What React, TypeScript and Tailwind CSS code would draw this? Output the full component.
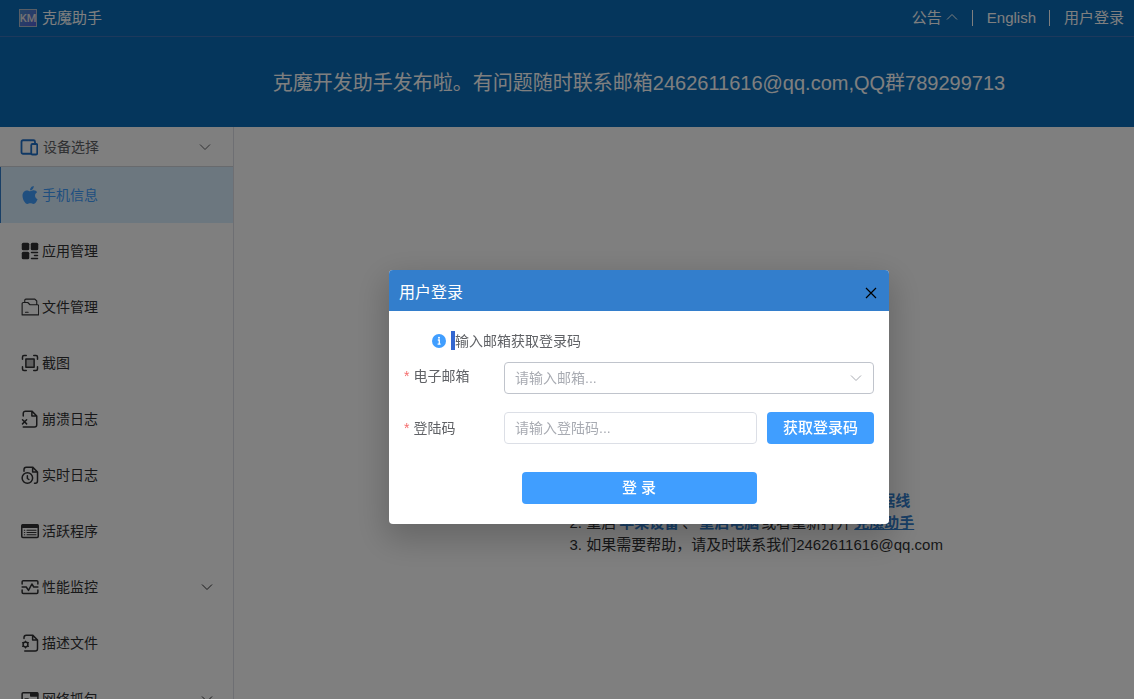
import type { ReactNode } from "react";
import { AiFillApple } from "react-icons/ai";

type MenuItem = {
    label: string;
    icon: ReactNode;
    active?: boolean;
    expandable?: boolean;
};

function Icon({ children }: { children: ReactNode }) {
    return (
        <svg viewBox="0 0 24 24" className="size-[18px] shrink-0" fill="none" stroke="currentColor" strokeWidth="2" strokeLinecap="round" strokeLinejoin="round">
            {children}
        </svg>
    );
}

function Chevron({ up = false }: { up?: boolean }) {
    return (
        <svg viewBox="0 0 12 12" className="size-3 shrink-0" fill="none" stroke="currentColor" strokeWidth="1">
            <path d={up ? "M1 7.5 6 2.5 11 7.5" : "M1 3.5 6 8.5 11 3.5"} />
        </svg>
    );
}

const menu: MenuItem[] = [
    { label: "手机信息", icon: <AiFillApple className="-mx-0.5 size-[22px] shrink-0" />, active: true },
    {
        label: "应用管理",
        icon: (
            <Icon>
                <g fill="currentColor" stroke="none">
                    <rect x="1" y="1" width="10" height="10" rx="2" />
                    <rect x="13" y="1" width="10" height="10" rx="2" />
                    <rect x="1" y="13" width="10" height="10" rx="2" />
                </g>
                <path d="M14 14h8M18 18h4M14 22h8" />
            </Icon>
        ),
    },
    {
        label: "文件管理",
        icon: (
            <Icon>
                <path strokeWidth="1.5" d="M1.5 22.5V7.5A1.5 1.5 0 0 1 3 6h6l3 3h10a1.5 1.5 0 0 1 1.5 1.5v12h-22M5 6V3a1.5 1.5 0 0 1 1.5-1.5h12L21 4v5M6 19h3.5" />
            </Icon>
        ),
    },
    {
        label: "截图",
        icon: (
            <Icon>
                <path d="M2 7V4a2 2 0 0 1 2-2h3M17 2h3a2 2 0 0 1 2 2v3M22 17v3a2 2 0 0 1-2 2h-3M7 22H4a2 2 0 0 1-2-2v-3" />
                <rect x="6.5" y="6.5" width="11" height="11" fill="currentColor" fillOpacity="0.3" />
            </Icon>
        ),
    },
    {
        label: "崩溃日志",
        icon: (
            <Icon>
                <path d="M3 22.5h15a3 3 0 0 0 3-3V8l-6.5-6.5H6a3 3 0 0 0-3 3V8M14.5 1.5V8H21M2 13l5.5 5.5M7.5 13 2 18.5" />
            </Icon>
        ),
    },
    {
        label: "实时日志",
        icon: (
            <Icon>
                <path d="M18 23h1a3 3 0 0 0 3-3V8l-6.5-6.5H7a3 3 0 0 0-3 3V7M15.5 1.5V8H22M8.5 13v3.5l2 1.5" />
                <circle cx="8.5" cy="16" r="7" />
            </Icon>
        ),
    },
    {
        label: "活跃程序",
        icon: (
            <Icon>
                <rect x="1" y="3.5" width="22" height="17" rx="1.5" />
                <path fill="currentColor" d="M2 4h20v3H2z" />
                <path strokeWidth="1.5" d="M4.5 11h.5M4.5 14h.5M4.5 17h.5M8 11h12M8 14h12M8 17h12" />
            </Icon>
        ),
    },
    {
        label: "性能监控",
        icon: (
            <Icon>
                <path d="M1.5 8V5A1.5 1.5 0 0 1 3 3.5h18A1.5 1.5 0 0 1 22.5 5v3M1.5 16v3A1.5 1.5 0 0 0 3 20.5h18a1.5 1.5 0 0 0 1.5-1.5v-3M1.5 12H7l3 4.5L14.5 8l2.5 4h5.5" />
            </Icon>
        ),
        expandable: true,
    },
    {
        label: "描述文件",
        icon: (
            <Icon>
                <path d="M5 22.5h14a3 3 0 0 0 3-3V8l-6.5-6.5H7a3 3 0 0 0-3 3V6M15.5 1.5V8H22" />
                <circle cx="6" cy="14" r="3.2" />
                <path strokeWidth="1.5" d="M6 9.5v1M6 17.500v1M2 11.500l1 .6M10 11.500l-1 .6M2 16.500l1-.6M10 16.500l-1-.6" />
            </Icon>
        ),
    },
    {
        label: "网络抓包",
        icon: (
            <Icon>
                <rect x="1.5" y="3.5" width="21" height="17" rx="1.5" />
                <path fill="currentColor" d="M13 4h9v4h-9z" />
                <path d="M5.5 12h4v4h-4z" />
            </Icon>
        ),
        expandable: true,
    },
];

function TopBar() {
    return (
        <div className="flex h-[37px] items-center justify-between border-b border-[#3a73b8] pr-2.5 pl-[19px] text-[15px]">
            <div className="flex items-center gap-[5px]">
                <svg viewBox="0 0 18 18" className="size-[18px]">
                    <defs>
                        <linearGradient id="logo" x1="0" y1="0" x2="1" y2="1">
                            <stop offset="0" stopColor="#4a8fcb" />
                            <stop offset="1" stopColor="#5560d8" />
                        </linearGradient>
                    </defs>
                    <rect x="0.5" y="0.5" width="17" height="17" fill="url(#logo)" stroke="#b0bccc" />
                    <text x="9" y="13" textAnchor="middle" fontSize="11" fontFamily="Roboto, sans-serif" fontWeight="500" fill="#e4e4e4">KM</text>
                </svg>
                <span>克魔助手</span>
            </div>
            <div className="flex items-center">
                <button className="flex items-center gap-1 pr-3.5">公告 <Chevron up /></button>
                <a href="#en" className="border-l border-white pr-[13px] pl-3.5 leading-4">English</a>
                <a href="#login" className="border-l border-white pl-3.5 leading-4">用户登录</a>
            </div>
        </div>
    );
}

function Sidebar() {
    return (
        <aside className="w-[234px] shrink-0 overflow-hidden border-r border-[#dcdfe6] text-sm">
            <button className="flex h-10 w-full items-center border-b border-[#d0d4da] pr-[22px] pl-5 text-[#606266]">
                <span className="text-[#1f70c9]">
                    <Icon>
                        <path strokeWidth="2.4" d="M14 21H4a2 2 0 0 1-2-2V5a2 2 0 0 1 2-2h14a2 2 0 0 1 2 2v2" />
                        <rect strokeWidth="2.4" x="15" y="8" width="8" height="14" rx="1.5" />
                    </Icon>
                </span>
                <span className="ml-[5px] flex-1 text-left">设备选择</span>
                <Chevron />
            </button>
            <nav>
                {menu.map((item) => (
                    <a
                        key={item.label}
                        href="#menu"
                        className={
                            item.active
                                ? "flex h-14 items-center border-l border-[#337ecc] bg-[#d8eeff] pr-5 pl-5 text-[#409eff]"
                                : "flex h-14 items-center pr-5 pl-[21px] text-[#303133]"
                        }
                    >
                        {item.icon}
                        <span className="ml-[3px] flex-1">{item.label}</span>
                        {item.expandable && <Chevron />}
                    </a>
                ))}
            </nav>
        </aside>
    );
}

function Help() {
    return (
        <main className="flex flex-1 items-center justify-center pt-[220px] pl-36">
            <ol className="w-[373px] text-[15px] leading-[22px] whitespace-nowrap text-[#303133]">
                <li>1. 请检查设备是否连接电脑，或者更换一根 <b className="ml-[5px] text-[#337ecc]">数据线</b></li>
                <li>
                    2. 重启<b className="mx-[3px] text-[#337ecc]">苹果设备</b>、
                    <b className="mx-0.5 text-[#337ecc]">重启电脑</b>或者重新打开
                    <a href="#km" className="ml-[3px] font-bold text-[#337ecc] underline">克魔助手</a>
                </li>
                <li>3. 如果需要帮助，请及时联系我们2462611616@qq.com</li>
            </ol>
        </main>
    );
}

function LoginDialog() {
    return (
        <div className="fixed inset-0 flex items-center justify-center bg-black/50 pt-[95px] pl-36">
            <div role="dialog" aria-labelledby="loginTitle" className="w-[500px] overflow-hidden rounded bg-white text-sm text-[#606266] shadow-[0_12px_32px_4px_rgba(0,0,0,0.2)]">
                <div className="flex h-[41px] items-center justify-between bg-[#337ecc] pt-1 pr-3 pl-2.5">
                    <h2 id="loginTitle" className="text-base text-white">用户登录</h2>
                    <button aria-label="关闭" className="text-black">
                        <svg viewBox="0 0 12 12" className="size-3" fill="none" stroke="currentColor" strokeWidth="1.2">
                            <path d="m1 1 10 10M11 1 1 11" />
                        </svg>
                    </button>
                </div>

                <form className="px-[15px] pt-5 pb-5">
                    <div className="flex h-[19px] items-center pl-7">
                        <svg viewBox="0 0 14 14" className="size-3.5">
                            <circle cx="7" cy="7" r="7" fill="#409eff" />
                            <circle cx="7" cy="3.8" r="1" fill="#fff" />
                            <path d="M5.8 6H7.3v4M5.6 10.2h3" fill="none" stroke="#fff" strokeWidth="1.3" />
                        </svg>
                        <span className="ml-[5px] h-full w-1 bg-[#3367d1]" />
                        <span>输入邮箱获取登录码</span>
                    </div>

                    <div className="mt-3 flex">
                        <label htmlFor="email" className="flex h-7 w-[100px] items-center gap-1"><span className="text-[#f56c6c]">*</span>电子邮箱</label>
                        <div className="relative flex-1">
                            <select id="email" defaultValue="" className="h-8 w-full appearance-none rounded border border-[#c0c4cc] bg-white px-2.5 text-[#a8abb2]">
                                <option value="">请输入邮箱...</option>
                            </select>
                            <span className="pointer-events-none absolute inset-y-0 right-3 flex items-center text-[#a8abb2]"><Chevron /></span>
                        </div>
                    </div>

                    <div className="mt-[18px] flex">
                        <label htmlFor="code" className="flex h-8 w-[100px] items-center gap-1"><span className="text-[#f56c6c]">*</span>登陆码</label>
                        <input id="code" type="text" placeholder="请输入登陆码..." className="h-8 min-w-0 flex-1 rounded border border-[#dcdfe6] px-2.5 placeholder:text-[#a8abb2]" />
                        <button type="button" className="ml-2.5 h-8 w-[107px] rounded bg-[#409eff] text-[15px] font-medium text-white">获取登录码</button>
                    </div>

                    <button type="button" className="mx-auto mt-7 block h-8 w-[235px] rounded bg-[#409eff] text-[15px] font-medium text-white">登 录</button>
                </form>
            </div>
        </div>
    );
}

export default function App() {
    return (
        <div className="flex h-screen flex-col overflow-hidden bg-white font-['Liberation_Sans','Noto_Sans_CJK_SC',sans-serif]">
            <header className="bg-[#0a6cb8] text-white">
                <TopBar />
                <p className="flex h-[90px] items-center justify-center pt-0.5 pl-36 text-xl whitespace-nowrap">克魔开发助手发布啦。有问题随时联系邮箱2462611616@qq.com,QQ群789299713</p>
            </header>
            <div className="flex min-h-0 flex-1">
                <Sidebar />
                <Help />
            </div>
            <LoginDialog />
        </div>
    );
}
